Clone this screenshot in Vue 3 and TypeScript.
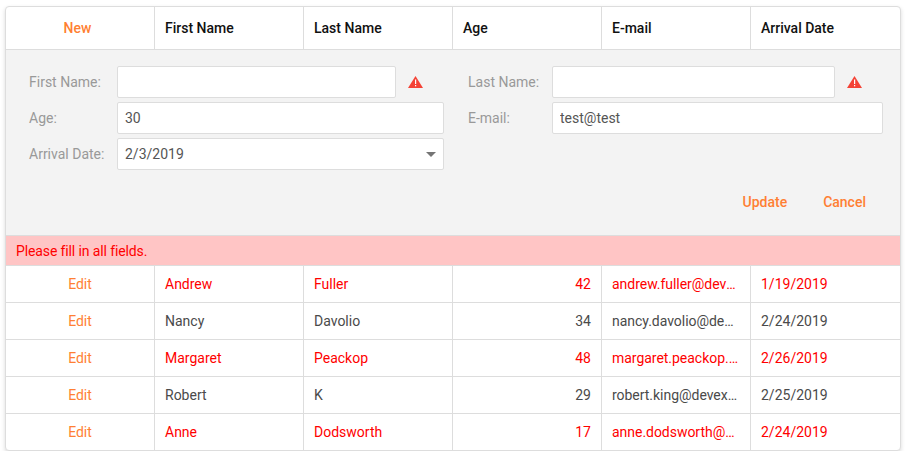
<script setup lang="ts">
interface Employee {
  first: string
  last: string
  age: number
  email: string
  date: string
  invalid: boolean
}

const columns: string[] = ['First Name', 'Last Name', 'Age', 'E-mail', 'Arrival Date']

const rows: Employee[] = [
  { first: 'Andrew', last: 'Fuller', age: 42, email: 'andrew.fuller@devexpress.com', date: '1/19/2019', invalid: true },
  { first: 'Nancy', last: 'Davolio', age: 34, email: 'nancy.davolio@devexpress.com', date: '2/24/2019', invalid: false },
  { first: 'Margaret', last: 'Peackop', age: 48, email: 'margaret.peackop.x@devexpress.com', date: '2/26/2019', invalid: true },
  { first: 'Robert', last: 'K', age: 29, email: 'robert.king@devexpress.com', date: '2/25/2019', invalid: false },
  { first: 'Anne', last: 'Dodsworth', age: 17, email: 'anne.dodsworth@devexpress.com', date: '2/24/2019', invalid: true },
]
</script>

<template>
  <div class="grid">
    <div class="row head">
      <div class="cell center link strong new">New</div>
      <div v-for="c in columns" :key="c" class="cell strong">{{ c }}</div>
    </div>

    <div class="form">
      <div class="fields">
        <div class="col col-left">
          <div class="field">
            <label class="label">First Name:</label>
            <input class="input" type="text" value="" />
            <svg class="warn" viewBox="0 0 15 12" width="15" height="12" aria-hidden="true">
              <path d="M7.5 0 L15 12 H0 Z" fill="#f44336" />
              <rect x="7" y="3.5" width="1.2" height="4.5" fill="#fff" />
              <rect x="7" y="9" width="1.2" height="1.3" fill="#fff" />
            </svg>
          </div>
          <div class="field">
            <label class="label">Age:</label>
            <input class="input" type="text" value="30" />
          </div>
          <div class="field">
            <label class="label">Arrival Date:</label>
            <div class="input select">
              <span>2/3/2019</span>
              <span class="arrow"></span>
            </div>
          </div>
        </div>
        <div class="col col-right">
          <div class="field">
            <label class="label">Last Name:</label>
            <input class="input" type="text" value="" />
            <svg class="warn" viewBox="0 0 15 12" width="15" height="12" aria-hidden="true">
              <path d="M7.5 0 L15 12 H0 Z" fill="#f44336" />
              <rect x="7" y="3.5" width="1.2" height="4.5" fill="#fff" />
              <rect x="7" y="9" width="1.2" height="1.3" fill="#fff" />
            </svg>
          </div>
          <div class="field">
            <label class="label">E-mail:</label>
            <input class="input" type="text" value="test@test" />
          </div>
        </div>
      </div>
      <div class="actions">
        <span class="btn link strong">Update</span>
        <span class="btn link strong">Cancel</span>
      </div>
    </div>

    <div class="message">Please fill in all fields.</div>

    <div v-for="r in rows" :key="r.email" class="row body" :class="{ invalid: r.invalid }">
      <div class="cell center link">Edit</div>
      <div class="cell">{{ r.first }}</div>
      <div class="cell">{{ r.last }}</div>
      <div class="cell right">{{ r.age }}</div>
      <div class="cell"><span class="clip">{{ r.email }}</span></div>
      <div class="cell">{{ r.date }}</div>
    </div>
  </div>
</template>

<style>
html,
body {
  margin: 0;
  background: #fff;
}
</style>

<style scoped>
.grid {
  box-sizing: border-box;
  width: 896px;
  margin: 6px 0 0 5px;
  border: 1px solid #ddd;
  border-radius: 4px;
  background: #fff;
  box-shadow: 0 2px 4px rgba(0, 0, 0, 0.15);
  font-family: Roboto, "Liberation Sans", sans-serif;
  font-size: 14px;
  color: #4a4a4a;
}
.row {
  display: grid;
  grid-template-columns: repeat(6, 149px);
}
.head {
  height: 43px;
  border-bottom: 1px solid #ddd;
  box-sizing: border-box;
  color: #111;
}
.body {
  height: 37px;
  box-sizing: border-box;
  border-bottom: 1px solid #ddd;
}
.body:last-child {
  border-bottom: 0;
  height: 36px;
}
.cell {
  box-sizing: border-box;
  display: flex;
  align-items: center;
  padding: 0 10px;
  border-right: 1px solid #ddd;
  min-width: 0;
}
.cell:last-child {
  border-right: 0;
}
.center {
  justify-content: center;
}
.new {
  padding-right: 15px;
}
.right {
  justify-content: flex-end;
}
.strong {
  font-weight: 500;
}
.link {
  color: #ff7f33;
}
.invalid {
  color: #f00;
}
.clip {
  overflow: hidden;
  white-space: nowrap;
  text-overflow: ellipsis;
  letter-spacing: -0.03px;
}
.form {
  box-sizing: border-box;
  height: 186px;
  padding: 16px 17px 0 24px;
  background: #f3f3f3;
  border-bottom: 1px solid #ddd;
}
.fields {
  display: grid;
  grid-template-columns: 414px 415px;
  column-gap: 24px;
  height: 104px;
}
.col {
  display: flex;
  flex-direction: column;
  gap: 4px;
}
.field {
  display: flex;
  align-items: center;
  height: 32px;
}
.label {
  flex: none;
  color: #999;
}
.col-left .label {
  width: 88px;
  margin-left: -1px;
}
.col-right .label {
  width: 84px;
}
.input {
  box-sizing: border-box;
  flex: 1;
  min-width: 0;
  height: 32px;
  padding: 0 7px;
  border: 1px solid #ddd;
  border-radius: 2px;
  background: #fff;
  font: inherit;
  color: #555;
  outline: none;
}
.select {
  display: flex;
  align-items: center;
  justify-content: space-between;
  padding-right: 7px;
}
.arrow {
  width: 0;
  height: 0;
  border-left: 5px solid transparent;
  border-right: 5px solid transparent;
  border-top: 5px solid #757575;
}
.warn {
  flex: none;
  margin: 0 21px 0 12px;
}
.actions {
  display: flex;
  justify-content: flex-end;
  margin-top: 16px;
  margin-right: -1px;
  height: 32px;
  align-items: center;
}
.btn {
  padding: 0 18px;
}
.message {
  box-sizing: border-box;
  height: 30px;
  padding: 0 10px;
  display: flex;
  align-items: center;
  background: #ffc5c5;
  color: #f00;
  letter-spacing: -0.12px;
  border-bottom: 1px solid #ddd;
}
</style>
